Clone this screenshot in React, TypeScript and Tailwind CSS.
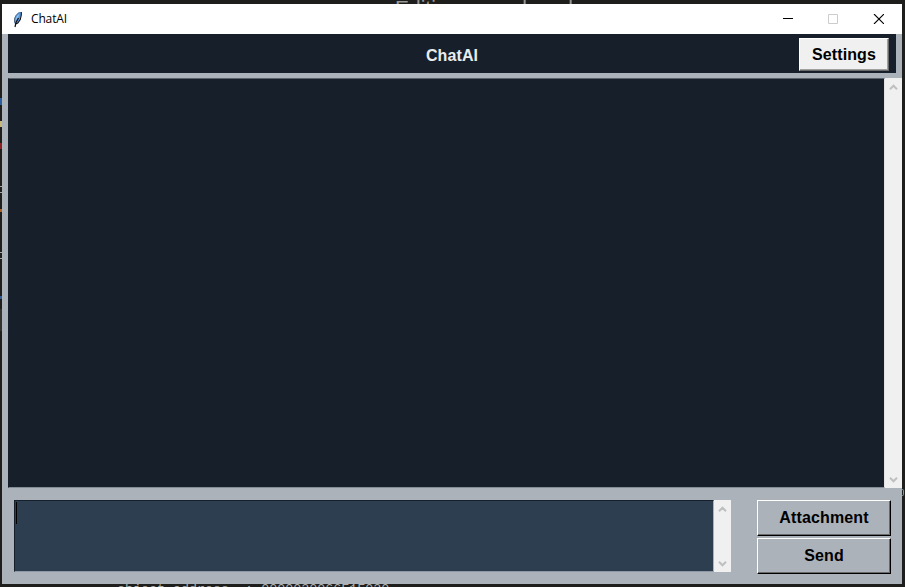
import React from "react";

function Feather() {
  return (
    <svg width="12" height="17" viewBox="0 0 12 17" className="shrink-0">
      <path d="M9 1 H7 L4 4 L2 7.5 V11.5 L3 13 L5.5 12 L8 8.5 L9.2 4 Z" fill="#5b9be4" />
      <path d="M7.5 3 L5 5 L3.5 8.5 L4 9 L6 6 Z" fill="#9cc9f2" />
      <path d="M7 1.5 L4 4.5 L2.5 8 V11.5" fill="none" stroke="#5c646e" strokeWidth="0.9" />
      <path d="M9.3 1 V4 L8.3 8.5 L5.8 12 L3.5 13" fill="none" stroke="#0b0f14" strokeWidth="1.1" />
      <path d="M6.5 7 L4 11.5 L3 16" fill="none" stroke="#101010" strokeWidth="1.2" />
    </svg>
  );
}

function Chevron({ down = false }: { down?: boolean }) {
  return (
    <svg width="9" height="7" viewBox="0 0 9 7" className={down ? "rotate-180" : ""}>
      <path d="M1 5.2 L4.5 1.7 L8 5.2" fill="none" stroke="#bfbfbf" strokeWidth="2" />
    </svg>
  );
}

function Scrollbar() {
  return (
    <div className="flex w-[17px] shrink-0 flex-col items-center justify-between bg-[#f0f0f0] pt-1.5 pb-[5px]">
      <Chevron />
      <Chevron down />
    </div>
  );
}

function ActionButton({ label }: { label: string }) {
  return (
    <button className="h-9 w-[134px] border border-t-white border-l-white border-r-black border-b-black bg-[#abb2b9] text-base font-bold tracking-[0.15px] text-black">
      <span className="flex h-full items-center justify-center border-r border-b border-[#696969] pl-px">{label}</span>
    </button>
  );
}

export default function App() {
  return (
    <div className="relative h-[587px] w-[905px] overflow-hidden bg-[#1e1f1c] pt-1 pl-0.5 font-['Liberation_Sans',Arial,sans-serif]">
      <div className="absolute top-0 left-[395px] h-1 w-[200px] overflow-hidden">
        <div className="flex text-[21px] leading-4 text-[#999]">
          <span className="w-[97px]">Editing</span>
          <span className="w-[39px]">and</span>
          <span>read</span>
        </div>
      </div>
      <div className="absolute top-[584px] left-[117px] h-[3px] w-[290px] overflow-hidden">
        <div className="font-['Liberation_Mono',monospace] text-[13.35px] leading-3 whitespace-pre text-[#b0b0a8]">object address  : 0000020066F1F020</div>
      </div>
      <div className="absolute top-[98px] left-0 h-[7px] w-0.5 bg-[#2b5e9c]" />
      <div className="absolute top-[121px] left-0 h-[6px] w-0.5 bg-[#c8b77b]" />
      <div className="absolute top-[143px] left-0 h-[6px] w-0.5 bg-[#8d2020]" />
      <div className="absolute top-[186px] left-0 h-[7px] w-0.5 border-y border-[#a6a6a6]" />
      <div className="absolute top-[209px] left-0 h-[3px] w-0.5 bg-[#ad6426]" />
      <div className="absolute top-[252px] left-0 h-[7px] w-0.5 border-y border-[#a6a6a6]" />
      <div className="absolute top-[296px] left-0 h-[3px] w-0.5 bg-[#315c98]" />
      <div className="absolute top-[309px] left-0 h-[22px] w-0.5 bg-[#34342f]" />
      <div className="absolute top-[489px] left-[902px] h-[7px] w-0.5 rounded-r-sm border border-l-0 border-[#7e9a9c]" />
      <div className="relative flex h-[580px] w-[900px] flex-col bg-[#abb2b9]">
        <div className="flex h-[30px] shrink-0 items-center justify-between bg-white pr-[18px] pl-2.5">
          <div className="flex items-center gap-[7px]">
            <Feather />
            <span className="font-['Open_Sans','Noto_Sans',sans-serif] text-[12px] leading-4 tracking-[-0.15px] text-black">ChatAI</span>
          </div>
          <svg width="101" height="10" viewBox="0 0 101 10" fill="none">
            <path d="M0 4.5 H10" stroke="#000" />
            <path d="M45.5 .5 H54.5 V9.5 H45.5 Z" stroke="#ccc" />
            <path d="M91 0 L101 10 M101 0 L91 10" stroke="#000" strokeWidth="1.1" />
          </svg>
        </div>
        <header className="relative mr-1.5 ml-1.5 flex h-[39px] shrink-0 items-start justify-end bg-[#17202a] pt-1 pr-[7px]">
          <h1 className="absolute inset-x-0 top-2.5 text-center text-base font-bold tracking-[0.1px] text-[#eaecee]">ChatAI</h1>
          <button className="h-[33px] w-[90px] border border-t-white border-l-white border-r-[#696969] border-b-[#696969] bg-[#f0f0f0] text-base font-bold tracking-[0.1px] text-black">
            <span className="flex h-full items-center justify-center border-r border-b border-[#a0a0a0] pt-0.5 pl-px">Settings</span>
          </button>
        </header>
        <div className="mt-[5px] ml-1.5 flex h-[410px] shrink-0">
          <div className="w-[877px] border border-t-[#59626b] border-r-[#e3e3e3] border-b-[#848b92] border-l-[#17202a] bg-[#17202a]" />
          <Scrollbar />
        </div>
        <div className="mt-3 flex pl-3">
          <div className="flex h-[72px] w-[717px]">
            <div className="w-[700px] border border-t-[#17202a] border-r-[#abb2b9] border-b-[#8f99a3] border-l-[#17202a] bg-[#2c3e50] pt-px pl-px">
              <div className="h-[22px] w-px bg-black" />
            </div>
            <Scrollbar />
          </div>
          <div className="ml-[26px] flex flex-col gap-0.5">
            <ActionButton label="Attachment" />
            <ActionButton label="Send" />
          </div>
        </div>
      </div>
    </div>
  );
}
